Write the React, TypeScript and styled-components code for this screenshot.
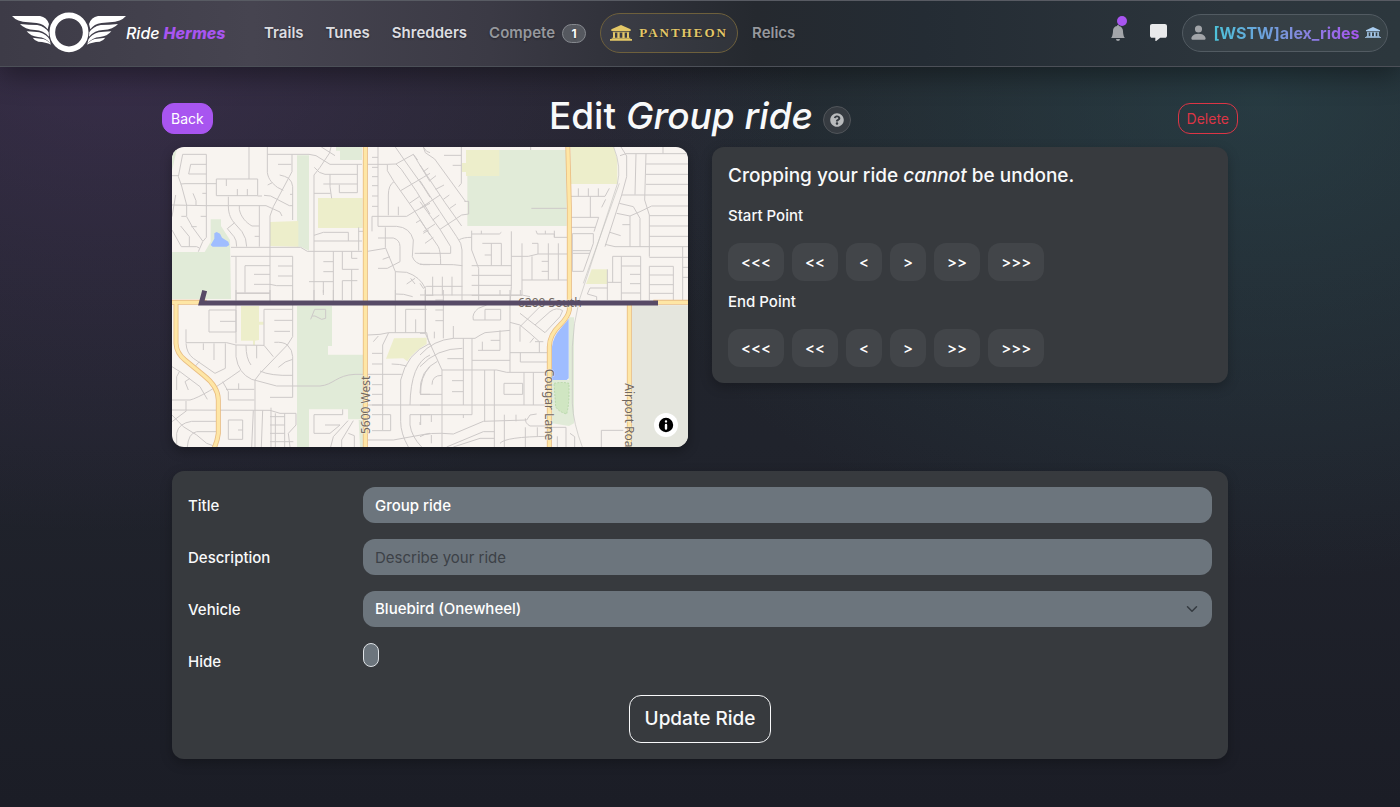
import React from "react";
import styled, { createGlobalStyle, css } from "styled-components";
import { BsBellFill, BsPersonFill } from "react-icons/bs";
import { FaQuestionCircle } from "react-icons/fa";
import { FaMessage } from "react-icons/fa6";

const purple = "#a855f0";
const sans = `Inter, "Liberation Sans", sans-serif`;

const GlobalStyle = createGlobalStyle`
  *, *::before, *::after { box-sizing: border-box; }
  body {
    margin: 0;
    min-height: 100vh;
    font-family: ${sans};
    font-size: 15px;
    font-weight: 500;
    line-height: 24px;
    color: #f8f9fa;
    background:
      radial-gradient(ellipse 50% 60% at 8% 6%, rgba(95, 62, 125, 0.36), transparent),
      radial-gradient(ellipse 48% 60% at 90% 12%, rgba(48, 92, 100, 0.4), transparent),
      linear-gradient(180deg, #22252b 0%, #20232c 55%, #1b1d26 100%);
    background-repeat: no-repeat;
  }
  button, input, select { font: inherit; color: inherit; }
`;

const Header = styled.header`
  display: flex;
  align-items: center;
  height: 67px;
  padding: 0 12px 2px;
  border-top: 1px solid #585b63;
  border-bottom: 1px solid #4c5058;
  background: linear-gradient(90deg, #3d3b47 0%, #464450 18%, #3b3a45 35%, #25292f 54%, #242c34 66%, #2c353c 88%, #2c373d 100%);
  box-shadow: 0 8px 28px rgba(0, 0, 0, 0.4);
`;

const Brand = styled.a`
  display: flex;
  align-items: center;
  width: 231px;
  color: #fff;
  font-size: 16px;
  font-style: italic;
  text-decoration: none;
  white-space: nowrap;
  svg { flex: none; }
  strong { margin-left: 4px; color: ${purple}; font-weight: 800; }
`;

const Nav = styled.nav`
  display: flex;
  align-items: center;
  flex: 1;
  padding-left: 21px;
  gap: 22px;
`;

const NavLink = styled.a<{ $dim?: boolean }>`
  display: flex;
  align-items: center;
  color: ${(p) => (p.$dim ? "#96989d" : "#dcdde0")};
  font-weight: 600;
  text-decoration: none;
  text-shadow: 0 1px 2px rgba(0, 0, 0, 0.4);
`;

const CountBadge = styled.span`
  margin: 2px 0 0 7px;
  width: 24px;
  height: 19px;
  border: 1px solid #85888e;
  border-radius: 10px;
  background: #55585f;
  color: #fff;
  font-size: 12px;
  font-weight: 700;
  line-height: 17px;
  text-align: center;
`;

const PantheonLink = styled.a`
  display: flex;
  align-items: center;
  justify-content: center;
  gap: 7px;
  margin: 0 -8px;
  width: 138px;
  height: 40px;
  border: 1px solid #6e603c;
  border-radius: 20px;
  background: rgba(255, 255, 255, 0.05);
  color: #e3c767;
  font-family: "Liberation Serif", serif;
  font-size: 13px;
  font-weight: 700;
  letter-spacing: 2px;
  text-decoration: none;
  text-shadow: 0 1px 2px rgba(0, 0, 0, 0.5);
`;

const Tools = styled.div`
  display: flex;
  align-items: center;
  gap: 16px;
`;

const IconButton = styled.button`
  position: relative;
  display: flex;
  align-items: center;
  justify-content: center;
  width: 24px;
  height: 24px;
  padding: 0;
  border: 0;
  background: none;
  color: #a2a5a9;
`;

const Dot = styled.span`
  position: absolute;
  top: -5px;
  right: 3px;
  width: 10px;
  height: 10px;
  border-radius: 50%;
  background: ${purple};
`;

const UserPill = styled.a`
  display: flex;
  align-items: center;
  justify-content: center;
  gap: 5px;
  margin-left: -4px;
  width: 206px;
  height: 38px;
  border: 1px solid #525b62;
  border-radius: 19px;
  background: rgba(255, 255, 255, 0.05);
  color: #a2a5a9;
  text-decoration: none;
`;

const UserName = styled.span`
  background: linear-gradient(90deg, #4cc3d9, #7b93dc 50%, ${purple});
  background-clip: text;
  color: transparent;
  font-size: 16px;
  font-weight: 700;
`;

const Main = styled.main`
  max-width: 1100px;
  margin: 0 auto;
  padding: 24px 12px 48px;
`;

const TitleRow = styled.div`
  display: grid;
  grid-template-columns: 1fr auto 1fr;
  align-items: center;
  height: 56px;
  padding-bottom: 2px;
`;

const Title = styled.h1`
  display: flex;
  align-items: center;
  gap: 10px;
  margin: 0 0 4px;
  font-size: 37px;
  font-weight: 500;
  line-height: 48px;
`;

const HelpButton = styled.button`
  display: flex;
  align-items: center;
  justify-content: center;
  margin-top: 8px;
  width: 28px;
  height: 28px;
  padding: 0;
  border: 1px solid #51555a;
  border-radius: 50%;
  background: #363b41;
  color: #b9bbbd;
`;

const ActionButton = styled.button<{ $kind: "solid" | "danger" }>`
  height: 31px;
  padding: 0 8px;
  border-radius: 12px;
  font-size: 14px;
  font-weight: 400;
  line-height: 21px;
  ${(p) =>
    p.$kind === "solid"
      ? css`
          justify-self: start;
          border: 1px solid ${purple};
          background: ${purple};
          color: #fff;
        `
      : css`
          justify-self: end;
          border: 1px solid #dc3545;
          background: transparent;
          color: #dc3545;
        `}
`;

const Panels = styled.div`
  display: grid;
  grid-template-columns: 1fr 1fr;
  align-items: start;
  gap: 24px;
  padding: 0 10px;
`;

const MapPanel = styled.section`
  position: relative;
  height: 300px;
  overflow: hidden;
  border-radius: 12px;
  background: #f8f4f0;
  box-shadow: 0 4px 12px rgba(0, 0, 0, 0.3);
  > svg { display: block; width: 100%; height: 100%; }
`;

const MapInfo = styled.button`
  position: absolute;
  right: 10px;
  bottom: 10px;
  width: 24px;
  height: 24px;
  padding: 0;
  border: 0;
  border-radius: 50%;
  background: #fff;
  color: #000;
  svg { display: block; }
`;

const Card = styled.section`
  padding: 16px;
  border-radius: 12px;
  background: #373a3e;
  box-shadow: 0 4px 12px rgba(0, 0, 0, 0.25);
`;

const CropHeading = styled.h2`
  margin: 0 0 15px;
  font-size: 19px;
  font-weight: 500;
  line-height: 26px;
`;

const Steps = styled.div`
  display: flex;
  flex-wrap: wrap;
  gap: 8px;
  margin: 15px 0 9px;
  &:last-child { margin-bottom: 0; }
`;

const StepButton = styled.button`
  height: 38px;
  padding: 2px 13px 0;
  border: 0;
  border-radius: 12px;
  background: #424549;
  color: #fff;
`;

const Form = styled.form`
  display: grid;
  grid-template-columns: 175px 1fr;
  row-gap: 16px;
  margin: 24px 10px 0;
  padding: 16px;
  border-radius: 12px;
  background: #373a3e;
  box-shadow: 0 4px 12px rgba(0, 0, 0, 0.25);
`;

const Label = styled.label`
  height: 36px;
  line-height: 38px;
`;

const field = css`
  width: 100%;
  height: 36px;
  padding: 0 12px;
  border: 0;
  border-radius: 12px;
  background-color: #6c757d;
  color: #fff;
`;

const TextInput = styled.input`
  ${field}
  &::placeholder { color: #3c4147; opacity: 1; font-weight: 400; }
`;

const SelectWrap = styled.div`
  position: relative;
  svg { position: absolute; right: 14px; top: 12px; pointer-events: none; }
`;

const Select = styled.select`
  ${field}
  appearance: none;
`;

const Check = styled.input`
  appearance: none;
  width: 16px;
  height: 24px;
  margin: 0;
  border: 1px solid #dee2e6;
  border-radius: 8px;
  background: #6c757d;
`;

const Submit = styled.button`
  grid-column: 1 / -1;
  justify-self: center;
  height: 48px;
  padding: 0 15px;
  border: 1px solid #f8f9fa;
  border-radius: 12px;
  background: transparent;
  font-size: 19px;
`;

const Temple = ({ width, color }: { width: number; color?: string }) => (
  <svg width={width} viewBox="0 0 66 48" fill={color ?? "currentColor"} aria-hidden="true">
    <path d="M33 0 62 13V18H4V13Z" />
    <path d="M8 20H58V23H8Z" opacity=".8" />
    <path d="M9 22h6v17H9zM22 22h7v17h-7zM37 22h7v17h-7zM51 22h6v17h-6z" />
    <path d="M5 38H61V41H5ZM0 42H66V47H0Z" />
  </svg>
);

const Wing = () => (
  <>
    <path d="M36 50H120Q140 53 147 74L143 90Q132 74 110 71L85 69Q50 67 36 50Z" />
    <path d="M60 74Q85 77 112 77Q136 82 146 99L147 112Q130 93 105 92Q74 91 60 74Z" />
    <path d="M80 96Q105 98 118 99Q141 106 149 121L152 134Q138 114 114 113Q92 111 80 96Z" />
    <path d="M98 115Q118 117 130 119Q147 125 153 136Q138 128 115 127Q103 123 98 115Z" />
  </>
);

const Logo = () => (
  <svg width="114" height="41" viewBox="36 38 342 123" fill="#fff" aria-hidden="true">
    <Wing />
    <g transform="translate(414 0) scale(-1 1)"><Wing /></g>
    <ellipse cx="207" cy="99" rx="50" ry="51" fill="none" stroke="#fff" strokeWidth="17" />
  </svg>
);

/* Minor streets, one path list per quarter of the map. */
const streetsNW =
  "M68 43H139V292L128 305L115 335M68 43L55 110L64 135L76 180L80 195V230L98 262L128 303M139 73H92L86 102H139M36 107H55M62 132L75 131H169M36 195L139 197H318L360 216L366 228M169 117H293V167H169ZM199 117V138M232 147V168M262 147V168M267 21V117M293 168H306M312 166L332 168L388 197H398M205 170V197C205 225 215 240 224 250L246 275Q260 295 260 320M224 248L202 266L222 290Q230 300 230 320M238 197V208C242 230 258 248 276 258H298M298 197V320M284 289H298M322 21V97C325 120 338 130 352 142L370 151M322 43H447L468 47L510 73H606M396 43V95L388 110L340 200L330 228V480M359 105Q375 108 386 115Q397 125 398 140V240M390 163H398M354 73H394M323 135L337 128M99 160L108 182V197M127 160H139M64 229H78M94 260H110M122 229H139M47 165L36 230M36 270L64 320H110L118 324M62 258L88 290V320M213 322H422L442 334H606M213 349H398V480M228 349V480M330 377H255V458M228 459H330M282 403H330M282 433H330L350 437H398M354 378H398M354 408H398M462 480V105L480 82L508 40L513 21M463 82L478 97L495 103H592M592 73V158H538V134M510 103V140L515 175M490 132H592M462 160H512M484 21L525 47M462 286L490 277H565V303M462 303H606M596 262V332M596 274H610M520 334V480M490 365H520M490 395H520M447 425H520M490 425V458M547 334V388H596M575 334V355H592M575 388V480M547 480V422H592M654 21V259M636 52H654M636 82H654M636 110H654M636 137H654M636 168H654M636 199H654M654 229H636V274M654 259H710Q750 262 760 300L757 350Q765 372 790 374H810M623 73H682L708 72L760 43L773 60M682 73V92L702 125Q685 135 685 165V226M654 229H740L768 212L810 190M715 226V200M706 21L733 60L790 140L810 172M708 72L724 88L770 155L810 222M760 43L810 125M702 125L762 210L810 285M722 152L790 112L810 100M748 190L780 168M790 21L800 34L810 38M768 248L782 240M790 280L806 270M676 262V322L706 395V480M623 334L676 325M654 294H700Q720 300 720 320V365L682 385H654M706 395L740 397Q780 410 796 445V480M740 432L765 415M752 415L765 432M706 462Q730 460 758 470M668 358L690 350M810 340H764";
const streetsNE =
  "M10 21L16 38L44 57L137 185M124 21V130L116 140M72 46H124M98 76H124M133 184H146V222L125 225L60 268M0 75L75 188L125 258M0 122L60 215L110 290Q126 310 126 330V480M0 185L60 268L92 320V340H0M0 240L55 320Q62 332 62 374M0 205L60 165M0 373L100 374L127 377M47 148L72 135M70 178L88 165M88 206L108 192M10 275L45 252M38 240L58 225M30 121L48 107M10 95L25 84M15 310L40 292M155 272V330L176 385V480M118 299Q130 292 155 292M155 282H238L244 277M184 272V282M274 274V440L271 480M306 310V466H155M274 349H325L354 342H443M336 310H354V342M336 349V420M385 310V420M415 310V420M306 420H443M365 364H385M365 394H385M155 377H274M155 406H274M155 436H274M187 310H244V376M214 310V376M194 345H214M348 272L352 282H403V292H443M376 272V282M403 272V292M334 205H440M332 21V30M0 430L10 445L20 439H127M38 410V466M67 410V466M96 410V466M15 466H40M452 169H555L568 145M545 202L557 178M475 145V169M505 145V169M535 145V169M511 169V232M452 232H536L522 275M452 262H527M457 281H520V310L490 394H457ZM457 332H512M457 340H510M600 47L618 41H804M678 41L674 180L688 225V350M729 21V41M648 41L645 164M678 72H804M678 103H804M678 133H804M606 165H804M598 190L640 200L660 235V320M590 220L630 228L660 215L695 198H804M630 228V320M688 227H804M688 258H804M688 289H804M555 313L585 320H804M688 352H804M607 254H630M570 277L602 287M788 320V480M788 382H804M788 412H804M578 349H662V480M578 349V427M604 349V480M604 378H662M630 403H662M630 431H662M562 427H604M604 459H662M562 388V480M688 379H760V480M688 379V480M688 405H760M688 434H760M688 460H760M562 444H510L502 462L530 470V480M603 21L620 48V110L605 165L555 320";
const streetsSW =
  "M228 0V160M228 10H330M330 0V35M147 60H228V126H147ZM180 94H228M78 118V158H200L228 165L312 166V58H398M398 0V140L382 165L300 250L285 270V471M312 166L340 200M343 91H398M343 124H390M343 157Q370 155 382 165Q398 180 398 200V322H330M78 160Q80 190 100 205L165 250L196 235V160M130 160V180M162 160V210M118 215L100 235M228 165V200Q235 250 275 268L350 288H480C520 285 530 255 585 253H725M258 166Q258 205 273 225M290 166V205M300 243Q330 258 398 256M355 232Q375 212 398 208M36 230L60 245L120 290L142 328M85 300L75 275L90 265M50 300V260L58 245M36 330H90Q130 320 240 242M36 360L330 361L360 370H408M78 333V361M36 375Q55 395 70 410L110 435L140 460L170 471M170 394H95Q55 400 50 430V471M170 425H110Q85 430 82 471M36 395L80 362M188 275L205 305V330H283M198 298H283M236 280V298M205 390H248V448H205ZM234 420H248M280 361L275 471M308 361L304 471M333 353V471M346 370V471M374 370V471M330 380H374M330 405H374M330 430H374M330 455H400M408 370V405L385 430L390 471M462 374H548V358M462 374V430H510L540 405H495M564 392L520 440L512 471M580 392L545 450V471M565 430L583 437V471M452 88L464 58H497V85L485 88L465 78H456M462 0V35M490 0V15M520 0V35M623 135L660 133L686 128L668 165V420M640 155L655 138M686 128H800Q803 150 810 165M706 0V128M737 128V58H800M767 88V128M796 0V128M636 190H668M636 222H668M636 284H668M636 313H668M636 345H668M695 222Q720 222 740 228M810 160Q740 190 722 270V345M810 195Q752 220 750 345M810 230Q780 260 782 313H810M623 345H810M636 374H692V422H636M722 345V395Q722 430 745 471M810 430L700 450H623M810 374H750V405Q755 440 785 471M782 374V405";
const streetsSE =
  "M16 0V130L66 240V471M0 130H16M0 15H306L330 20M240 0V15M301 0V15M46 30H70M70 0V145M46 60H70M46 92H70M43 125V145M0 195Q40 150 100 145H165Q180 135 195 128L270 121M0 230Q50 175 127 175M0 310Q-2 240 52 214M0 313H66M36 284Q36 256 66 256M156 145V374M130 145V345M82 206H130M96 272H130M96 305H130M100 108V145M270 0V246M160 90H242V58H195V90M160 90Q155 70 175 55L200 45M174 181H240V121M187 155V181M156 211H270M212 151H240M66 240H230L260 247H385M194 240V394M223 240V471M312 247V345M340 247V345M252 280H308V313H252ZM0 345H388M0 374H156M270 188H385M301 188V216H385M358 188V155L330 130L300 105L270 97M300 70L375 128L420 80L428 62Q410 50 390 65L345 105M300 155V110L360 50M330 158L342 143M345 155H370M0 440Q20 425 100 432L190 394L320 390L330 375L350 372M80 471L190 425H223M100 471L180 445H223M253 374V471M288 374V394M388 408H330Q315 400 316 385M240 460Q255 440 388 439M316 412V471M352 412V439M388 412H438V471M412 439V471M450 430L464 440V471M544 471V421H610M34 374V396M130 374V384M0 405V396M34 435V460";

const mainRoads = [
  "M616 0V960",
  "M1223 0L1228 200V510Q1225 530 1200 555Q1168 585 1168 620V960",
  "M48 490V610Q50 640 75 660L130 705Q175 740 175 780V880Q172 905 160 930",
  "M30 487H140",
  "M1480 487H1600",
  "M1408 492V960",
];

const RideMap = () => (
  <svg viewBox="36 21 1548 900" preserveAspectRatio="xMidYMid slice" role="img" aria-label="Map of the ride">
    <g fill="#e1ebd8">
      <path d="M411 46H447V332L422 320H411ZM36 336H134L152 305V238H183V258L210 300L213 477H36ZM36 30H50L40 75L36 90ZM528 21H606V60H540V32H528Z" />
      <path d="M922 30H1220V258H922Z" />
      <path d="M411 498H516V618H504V644H610V838H564V808H447V921H411ZM596 840H610V921H600Z" />
      <path d="M1227 532H1242V850L1227 858L1176 850V720H1226Z" />
    </g>
    <g fill="#edeecb">
      <path d="M474 174H608V264H474ZM330 246L415 243V320L330 318Z" />
      <path d="M918 30H1018V108H918V96H906V69H918ZM1232 21H1361L1372 60V132H1232ZM1295 388H1342V432H1278Z" />
      <path d="M243 498H297V600L285 602V615H279V602H243ZM297 545H311V554H297ZM702 595L800 593V612Q760 635 742 664L730 655L678 656Z" />
    </g>
    <path fill="#e5e6de" d="M1415 496H1584V921H1415Z" />
    <path fill="#9fbdff" d="M152 315L163 296V280L170 276L180 281L186 293L205 305L208 315L200 320H158ZM1226 536V715L1220 720H1176V620Q1180 590 1200 568Z" />
    <path fill="#d0e6c2" stroke="#a9cf9c" strokeWidth="2" strokeDasharray="6 4" d="M1182 730Q1205 725 1227 730V760Q1227 795 1220 822Q1195 815 1187 800Z" />
    <g fill="none" stroke="#cdc9c8" strokeWidth="3">
      <path d={streetsNW} />
      <path d={streetsNE} transform="translate(780 0)" />
      <path d={streetsSW} transform="translate(0 450)" />
      <path d={streetsSE} transform="translate(780 450)" />
    </g>
    <path fill="none" stroke="#c4c2c0" strokeWidth="2" d="M1361 21Q1385 80 1372 132L1258 480Q1240 550 1237 620V790Q1240 850 1267 921M1378 130L1270 430" />
    <g fill="none" stroke="#e9bd83" strokeWidth="15">
      {mainRoads.map((d) => <path key={d} d={d} />)}
    </g>
    <g fill="none" stroke="#fee6a5" strokeWidth="10">
      {mainRoads.map((d) => <path key={d} d={d} />)}
    </g>
    <g fill="#71685f" fontFamily="'Noto Sans', sans-serif" fontSize="36" fontWeight="400" stroke="#f8f4f0" strokeWidth="3" strokeOpacity=".6" paintOrder="stroke">
      <text x="1074" y="501">6200 South</text>
      <text transform="translate(630 882) rotate(-90)">5600 West</text>
      <text transform="translate(1156 686) rotate(90)">Cougar Lane</text>
      <text transform="translate(1395 730) rotate(90)">Airport Road</text>
    </g>
    <path fill="none" stroke="#574a66" strokeWidth="15" d="M134 452L124 489H1494" />
  </svg>
);

const stepLabels = ["<<<", "<<", "<", ">", ">>", ">>>"];

const StepRow = ({ name }: { name: string }) => (
  <>
    <div id={name}>{name === "start" ? "Start Point" : "End Point"}</div>
    <Steps role="group" aria-labelledby={name}>
      {stepLabels.map((s) => <StepButton key={s} type="button">{s}</StepButton>)}
    </Steps>
  </>
);

export default function App() {
  return (
    <>
      <GlobalStyle />
      <Header>
        <Brand href="#home">
          <Logo />
          <span>Ride<strong>Hermes</strong></span>
        </Brand>
        <Nav>
          <NavLink href="#trails">Trails</NavLink>
          <NavLink href="#tunes">Tunes</NavLink>
          <NavLink href="#shredders">Shredders</NavLink>
          <NavLink href="#compete" $dim>Compete<CountBadge>1</CountBadge></NavLink>
          <PantheonLink href="#pantheon"><Temple width={22} />PANTHEON</PantheonLink>
          <NavLink href="#relics" $dim>Relics</NavLink>
        </Nav>
        <Tools>
          <IconButton type="button" aria-label="Notifications"><BsBellFill size={16} /><Dot /></IconButton>
          <IconButton type="button" aria-label="Messages"><FaMessage size={17} color="#e9eaeb" /></IconButton>
          <UserPill href="#profile">
            <BsPersonFill size={19} />
            <UserName>[WSTW]alex_rides</UserName>
            <Temple width={16} color="#a9cdf0" />
          </UserPill>
        </Tools>
      </Header>
      <Main>
        <TitleRow>
          <ActionButton type="button" $kind="solid">Back</ActionButton>
          <Title>
            <span>Edit <em>Group ride</em></span>
            <HelpButton type="button" aria-label="Help"><FaQuestionCircle size={14} /></HelpButton>
          </Title>
          <ActionButton type="button" $kind="danger">Delete</ActionButton>
        </TitleRow>
        <Panels>
          <MapPanel>
            <RideMap />
            <MapInfo type="button" aria-label="Map attribution">
              <svg width="24" height="24" viewBox="0 0 20 20" fillRule="evenodd">
                <path d="M4 10a6 6 0 1 0 12 0 6 6 0 1 0-12 0m5-3a1 1 0 1 0 2 0 1 1 0 1 0-2 0m0 3a1 1 0 1 1 2 0v3a1 1 0 1 1-2 0" />
              </svg>
            </MapInfo>
          </MapPanel>
          <Card>
            <CropHeading>Cropping your ride <em>cannot</em> be undone.</CropHeading>
            <StepRow name="start" />
            <StepRow name="end" />
          </Card>
        </Panels>
        <Form onSubmit={(e) => e.preventDefault()}>
          <Label htmlFor="title">Title</Label>
          <TextInput id="title" defaultValue="Group ride" />
          <Label htmlFor="description">Description</Label>
          <TextInput id="description" placeholder="Describe your ride" />
          <Label htmlFor="vehicle">Vehicle</Label>
          <SelectWrap>
            <Select id="vehicle"><option>Bluebird (Onewheel)</option></Select>
            <svg width="12" height="12" viewBox="0 0 16 16" fill="none" stroke="#343a40" strokeWidth="2" strokeLinecap="round" strokeLinejoin="round" aria-hidden="true">
              <path d="m2 5 6 6 6-6" />
            </svg>
          </SelectWrap>
          <Label htmlFor="hide">Hide</Label>
          <Check id="hide" type="checkbox" />
          <Submit type="submit">Update Ride</Submit>
        </Form>
      </Main>
    </>
  );
}
